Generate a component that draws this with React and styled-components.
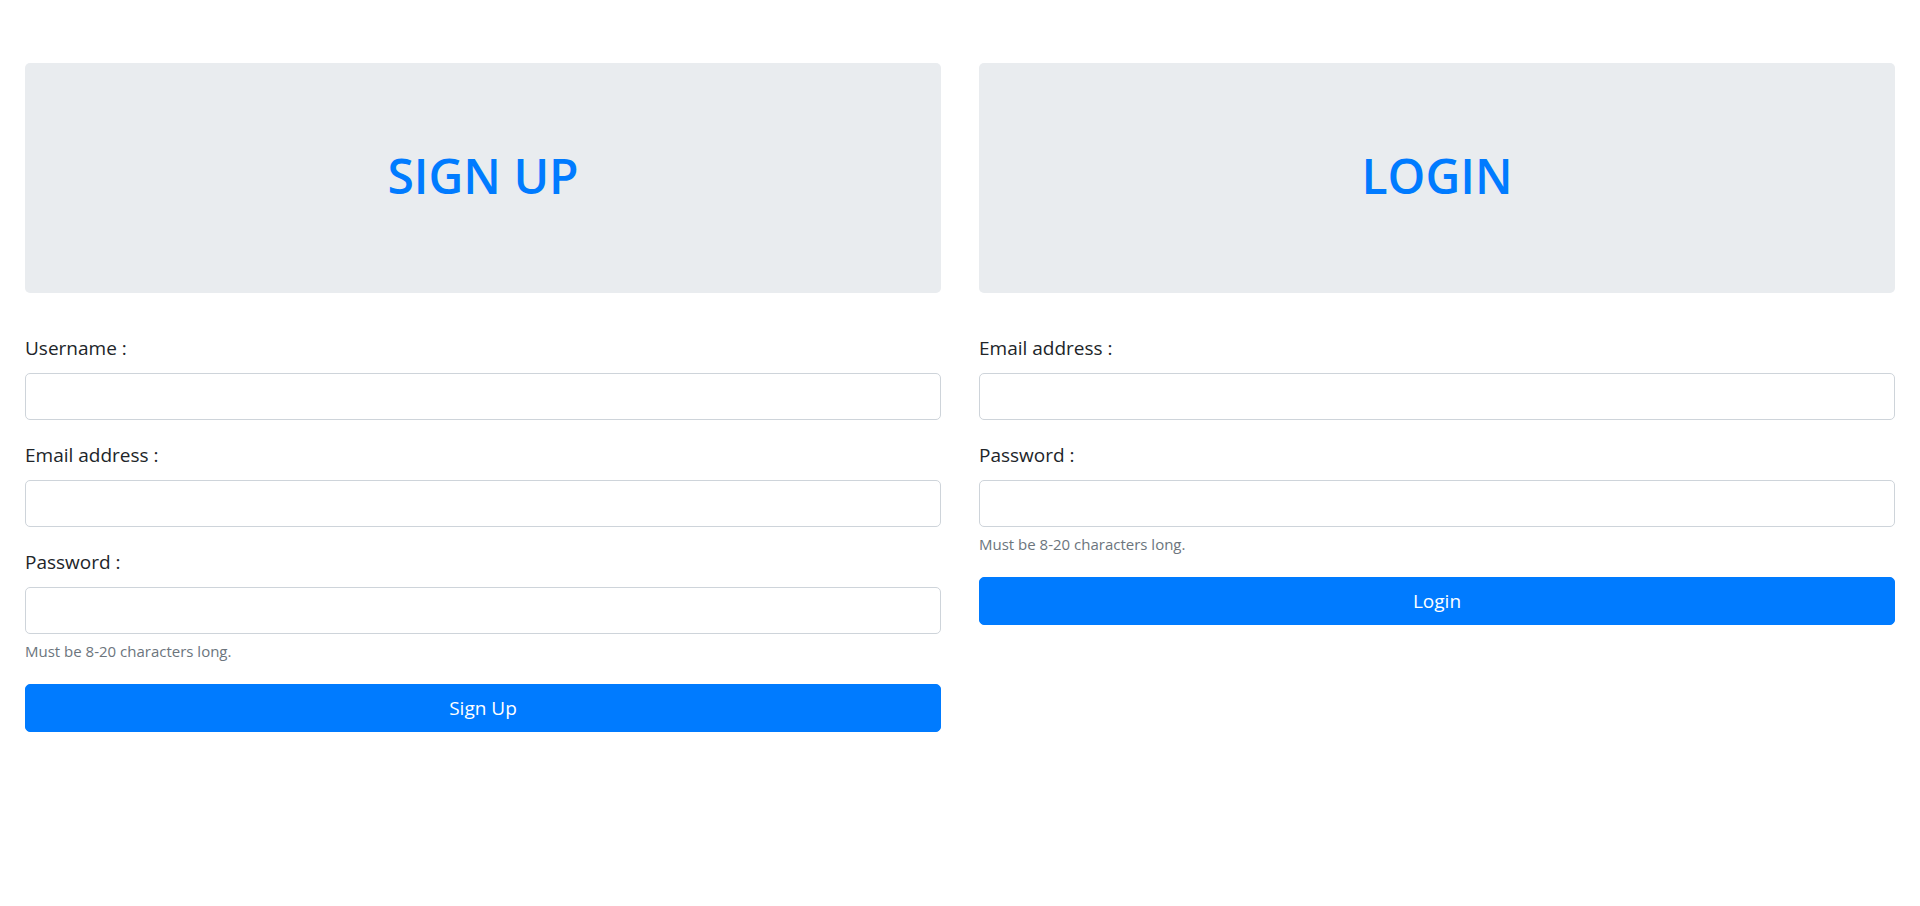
import React from "react";
import styled, { createGlobalStyle } from "styled-components";

const GlobalStyle = createGlobalStyle`
  body {
    margin: 0;
    background: #ffffff;
    font-family: "Open Sans", "Noto Sans", "Liberation Sans", sans-serif;
    color: #212529;
  }
  * {
    box-sizing: border-box;
  }
`;

const Page = styled.div`
  display: grid;
  grid-template-columns: 1fr 1fr;
  column-gap: 38px;
  padding: 63px 25px 40px;
  align-items: start;
`;

const Column = styled.section`
  display: flex;
  flex-direction: column;
`;

const Jumbotron = styled.div`
  background-color: #e9ecef;
  border-radius: 5px;
  padding: 80px 40px;
  margin-bottom: 40px;
  display: flex;
  justify-content: center;
`;

const Heading = styled.h1`
  margin: 3px 0 7px;
  font-size: 48px;
  line-height: 60px;
  font-weight: 600;
  color: #007bff;
  text-align: center;
`;

const Form = styled.form`
  display: flex;
  flex-direction: column;
`;

const FormGroup = styled.div`
  display: flex;
  flex-direction: column;
  margin-bottom: 20px;
`;

const Label = styled.label`
  font-size: 19px;
  line-height: 30px;
  margin-bottom: 10px;
  color: #212529;
`;

const Input = styled.input`
  width: 100%;
  height: 47px;
  padding: 7px 15px;
  font-size: 20px;
  font-family: inherit;
  color: #495057;
  background: #ffffff;
  border: 1px solid #ced4da;
  border-radius: 5px;
  outline: none;
`;

const HelpText = styled.small`
  margin-top: 5px;
  font-size: 15px;
  line-height: 25px;
  color: #6c757d;
`;

const Button = styled.button`
  width: 100%;
  height: 48px;
  padding: 7px 15px;
  font-family: inherit;
  font-size: 19px;
  line-height: 30px;
  color: #ffffff;
  background-color: #007bff;
  border: 1px solid #007bff;
  border-radius: 5px;
  cursor: pointer;
`;

function Field({ label, type, help }) {
  return (
    <FormGroup>
      <Label>{label}</Label>
      <Input type={type} />
      {help && <HelpText>{help}</HelpText>}
    </FormGroup>
  );
}

function Panel({ title, fields, action }) {
  return (
    <Column>
      <Jumbotron>
        <Heading>{title}</Heading>
      </Jumbotron>
      <Form onSubmit={(e) => e.preventDefault()}>
        {fields.map((f) => (
          <Field key={f.label} {...f} />
        ))}
        <Button type="submit">{action}</Button>
      </Form>
    </Column>
  );
}

const help = "Must be 8-20 characters long.";

export default function App() {
  return (
    <>
      <GlobalStyle />
      <Page>
        <Panel
          title="SIGN UP"
          action="Sign Up"
          fields={[
            { label: "Username :", type: "text" },
            { label: "Email address :", type: "email" },
            { label: "Password :", type: "password", help },
          ]}
        />
        <Panel
          title="LOGIN"
          action="Login"
          fields={[
            { label: "Email address :", type: "email" },
            { label: "Password :", type: "password", help },
          ]}
        />
      </Page>
    </>
  );
}
